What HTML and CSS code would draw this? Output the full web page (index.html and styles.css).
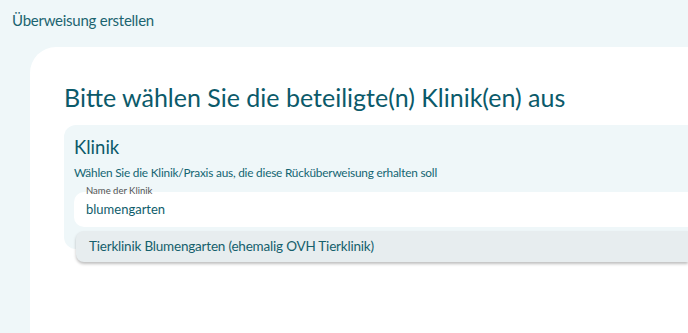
FILE: index.html
```html
<!DOCTYPE html>
<html lang="de">
<head>
    <meta charset="UTF-8">
    <meta name="viewport" content="width=device-width, initial-scale=1.0">
    <title>Überweisung erstellen</title>
    <link rel="stylesheet" href="styles.css">
</head>
<body>
    <header class="page-header">Überweisung erstellen</header>

    <main class="card">
        <h1 class="card-title">Bitte wählen Sie die beteiligte(n) Klinik(en) aus</h1>

        <section class="clinic-box">
            <h2 class="clinic-title">Klinik</h2>
            <p class="clinic-hint">Wählen Sie die Klinik/Praxis aus, die diese Rücküberweisung erhalten soll</p>

            <div class="field">
                <label class="field-label" for="clinic-name">Name der Klinik</label>
                <input class="field-input" id="clinic-name" type="text" value="blumengarten">
                <ul class="suggestions">
                    <li class="suggestion">Tierklinik Blumengarten (ehemalig OVH Tierklinik)</li>
                </ul>
            </div>
        </section>
    </main>
</body>
</html>
```

FILE: styles.css
```css
/* Grundlayout */
body {
    margin: 0;
    padding: 0;
    background: #eff7f9;
    font-family: Lato, "Open Sans", sans-serif;
    color: #0f5d6b;
    overflow: hidden;
    height: 333px;
}

.page-header {
    box-sizing: border-box;
    height: 47px;
    padding: 11px 12px 0;
    font-size: 15px;
    line-height: 18px;
    letter-spacing: -0.25px;
    color: #1b6470;
}

.card {
    box-sizing: border-box;
    background: white;
    margin-left: 30px;
    border-top-left-radius: 26px;
    padding: 36px 0 0 34px;
    height: 286px;
}

.card-title {
    margin: 0 0 14px;
    font-size: 25px;
    font-weight: 400;
    line-height: 28px;
    color: #0b5a6a;
}

.clinic-box { /* hellblaue Box */
    background: #eff7f9;
    border-radius: 12px 0 0 12px;
    padding: 10px 0 22px 10px;
    position: relative;
}

.clinic-title {
    margin: 0;
    font-size: 18.5px;
    font-weight: 400;
    line-height: 24px;
    color: #0b5a6a;
}

.clinic-hint {
    margin: 6px 0 11px;
    font-size: 11.8px;
    line-height: 16px;
    letter-spacing: -0.2px;
    color: #136572;
}

.field {
    position: relative;
    background: white;
    border-radius: 10px 0 0 10px;
    height: 35px;
}

.field-label {
    position: absolute;
    left: 12px;
    top: -7px;
    font-size: 9.5px;
    color: #555;
}

.field-input {
    border: none;
    background: transparent;
    outline: none;
    font-family: inherit;
    font-size: 13px;
    color: #0f5d6b;
    padding: 9px 12px 0;
    width: 90%;
}

.suggestions { /* Vorschlagsliste über der Box */
    position: absolute;
    left: 2px;
    right: 0;
    top: 39px;
    margin: 0;
    padding: 0;
    list-style: none;
    z-index: 2;
}

.suggestion {
    background: #e7edef;
    border-radius: 8px 0 0 8px;
    box-shadow: 0 2px 3px rgba(0,0,0,0.25);
    padding: 7px 13px;
    font-size: 13.5px;
    line-height: 17px;
    letter-spacing: -0.2px;
    color: #15606c;
}
```
